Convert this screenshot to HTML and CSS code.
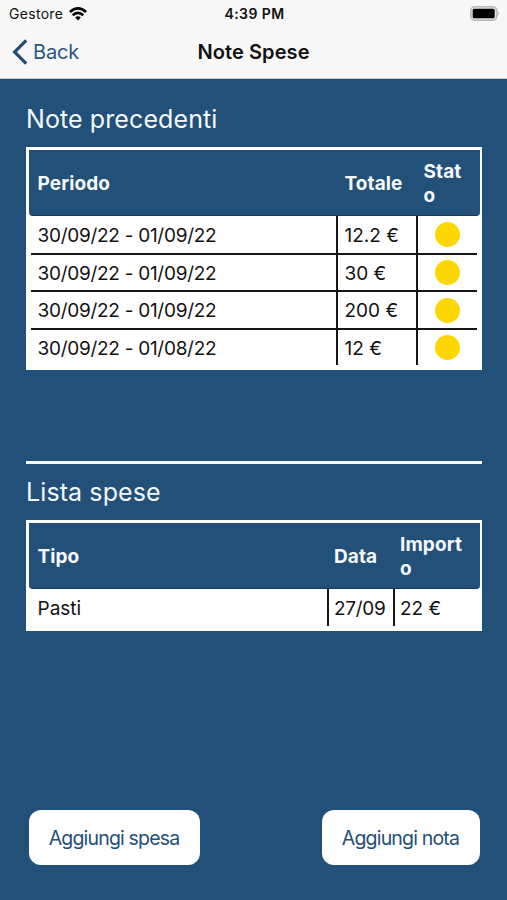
FILE: index.html
```html
<!DOCTYPE html>
<html lang="it">
<head>
<meta charset="utf-8">
<meta name="viewport" content="width=device-width">
<title>Note Spese</title>
<link rel="stylesheet" href="styles.css">
</head>
<body>
<header class="top">
  <div class="status">
    <div class="carrier"><span>Gestore</span>
      <svg class="wifi" width="18" height="14" viewBox="0 0 18 14" fill="none" stroke="#000" stroke-width="2.7"><path d="M.9 5Q9-2.1 17.1 5M3.7 8.2Q9 3.5 14.3 8.2"/><path d="M9 13.4L6.2 10.5Q9 8.2 11.8 10.5Z" fill="#000" stroke="none"/></svg>
    </div>
    <time class="clock">4:39 PM</time>
    <svg class="battery" width="31" height="15" viewBox="0 0 31 15"><rect x="1.8" y=".8" width="26" height="13.4" rx="4" fill="#e4e4e4" stroke="#b8b8b8" stroke-width="1.6"/><rect x="3.7" y="2.8" width="22" height="9.4" rx="1.5" fill="#000"/><path d="M28.9 5Q31 7.5 28.9 10Z" fill="#b5b5b5"/></svg>
  </div>
  <nav class="nav">
    <a class="back"><svg width="16" height="26" viewBox="0 0 16 26" fill="none" stroke="#235078" stroke-width="3.2"><path d="M14.2 1.4L2.6 13L14.2 24.6"/></svg><span>Back</span></a>
    <h1 class="title">Note Spese</h1>
  </nav>
</header>
<main class="content">
  <section class="notes">
    <h2 class="heading">Note precedenti</h2>
    <div class="table periods">
      <div class="row head"><span>Periodo</span><span>Totale</span><span>Stat<br>o</span></div>
      <div class="row"><span class="date">30/09/22 - 01/09/22</span><span>12.2 €</span><span><i class="dot"></i></span></div>
      <div class="row"><span class="date">30/09/22 - 01/09/22</span><span>30 €</span><span><i class="dot"></i></span></div>
      <div class="row"><span class="date">30/09/22 - 01/09/22</span><span>200 €</span><span><i class="dot"></i></span></div>
      <div class="row"><span class="date">30/09/22 - 01/08/22</span><span>12 €</span><span><i class="dot"></i></span></div>
    </div>
  </section>
  <section class="expenses">
    <h2 class="heading">Lista spese</h2>
    <div class="table items">
      <div class="row head"><span>Tipo</span><span>Data</span><span>Import<br>o</span></div>
      <div class="row"><span>Pasti</span><span class="date">27/09</span><span>22 €</span></div>
    </div>
  </section>
  <footer class="actions">
    <button class="add-expense">Aggiungi spesa</button>
    <button class="add-note">Aggiungi nota</button>
  </footer>
</main>
</body>
</html>
```
FILE: styles.css
```css
* { box-sizing: border-box; }
body {
  margin: 0;
  height: 900px;
  display: flex;
  flex-direction: column;
  background: #235078;
  font-family: Inter, "Liberation Sans", sans-serif;
  color: #111;
}
.top { height: 79px; flex: none; background: #f7f7f7; border-bottom: 1px solid #c5cace; }
.status {
  height: 27px;
  padding: 0 7px 0 9px;
  display: grid;
  grid-template-columns: 1fr auto 1fr;
  align-items: center;
  font-size: 14px;
}
.carrier { display: flex; align-items: center; gap: 6px; letter-spacing: 0.3px; }
.clock { font-weight: 600; letter-spacing: 0.4px; }
.battery { justify-self: end; }
.nav {
  height: 50px;
  padding: 0 12px;
  display: grid;
  grid-template-columns: 1fr auto 1fr;
  align-items: center;
}
.back { display: flex; align-items: center; gap: 5px; color: #2b5880; font-size: 20px; letter-spacing: -0.2px; }
.title { margin: 0; font-size: 20px; font-weight: 600; letter-spacing: 0.1px; }
.content { flex: 1; display: flex; flex-direction: column; padding: 0 25px 35px 26px; }
.notes { height: 382px; padding-top: 19px; }
.expenses { border-top: 3px solid #f4f8fc; padding-top: 7px; }
.heading {
  margin: 0;
  height: 49px;
  line-height: 42px;
  font-size: 25px;
  font-weight: 400;
  letter-spacing: 0.1px;
  color: #f3f8fd;
}
.table { background: #fff; padding: 3px 2.5px 5px; font-size: 19px; }
.row { display: grid; height: 36.5px; margin: 0 2.5px; }
.row + .row + .row { height: 37.5px; border-top: 2px solid #161616; }
.periods .row { grid-template-columns: 305px 80px 1fr; }
.items .row { grid-template-columns: 295.5px 66px 1fr; }
.row span { display: flex; align-items: center; padding: 2px 0 0 6.5px; white-space: nowrap; }
.row span + span { border-left: 2px solid #161616; }
.row .date { letter-spacing: -0.28px; }
.items .row span + span { padding-left: 5.5px; }
.periods .row span:last-child { justify-content: center; padding: 1px 0 0; }
.row.head {
  height: 66px;
  margin: 0;
  padding: 1px 2.5px 0;
  background: #235078;
  border-radius: 0 0 4px 4px;
  border-bottom: 1px solid #173957;
  color: #f6faff;
  font-weight: 700;
  line-height: 24.5px;
  letter-spacing: 0.1px;
}
.row.head span + span { border-color: transparent; }
.periods .row.head span:last-child { justify-content: flex-start; padding: 2px 0 0 5.5px; }
.dot { width: 25px; height: 25px; border-radius: 50%; background: #ffd700; }
.actions { margin-top: auto; display: flex; justify-content: space-between; padding: 0 2.5px; }
.actions button {
  height: 55px;
  padding: 0;
  border: 0;
  border-radius: 12px;
  background: #fff;
  color: #235078;
  font: 400 19.5px Inter, "Liberation Sans", sans-serif;
  letter-spacing: -0.82px;
  white-space: nowrap;
}
.add-expense { width: 171px; }
.add-note { width: 158px; }
```
